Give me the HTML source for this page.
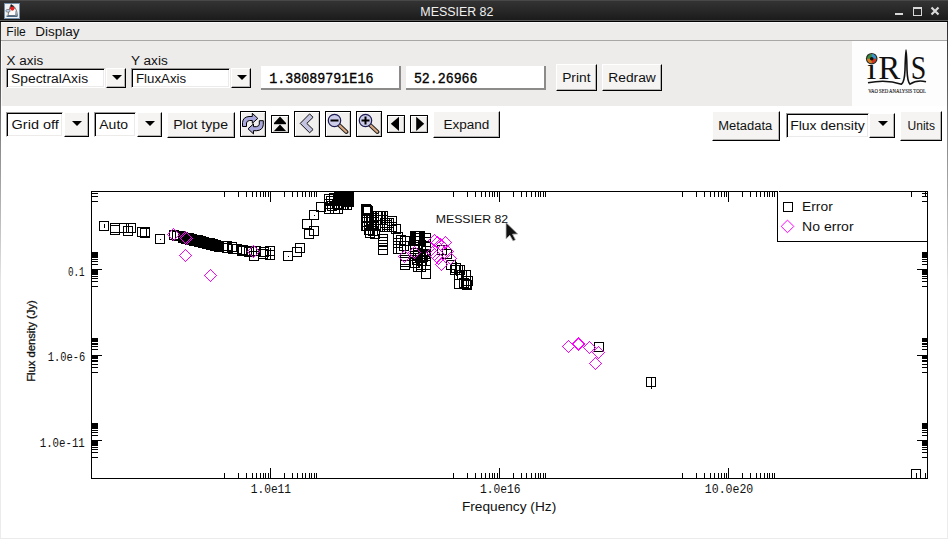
<!DOCTYPE html>
<html><head><meta charset="utf-8">
<style>
*{margin:0;padding:0;box-sizing:border-box}
html,body{width:948px;height:539px;overflow:hidden;background:#fff;font-family:"Liberation Sans",sans-serif;color:#111}
.a{position:absolute}
#title{left:0;top:0;width:948px;height:22px;background:linear-gradient(#484848 0px,#484848 1px,#333 1px,#262626 12px,#1b1b1b 20px,#5c5c5c 20px,#5c5c5c 21px,#000 21px)}
#lb{left:0;top:22px;width:1px;height:517px;background:linear-gradient(#2a2a2a,#888 120px,#e6e6e6 260px,#ececec)}
#rb{left:947px;top:22px;width:1px;height:517px;background:linear-gradient(#2a2a2a,#888 120px,#e6e6e6 260px,#ececec)}
#bb{left:0;top:538px;width:948px;height:1px;background:#ecebea}
#menu{left:1px;top:22px;width:946px;height:19px;background:#edeceb;border-top:1px solid #f8f8f8;border-bottom:1px solid #a9a7a5}
#tb{left:1px;top:41px;width:851px;height:65px;background:#edeceb;border-left:1px solid #fafafa}
#logo{left:852px;top:41px;width:95px;height:65px;background:#fdfdfd}
.combo{height:20px}
.ctext{position:absolute;left:0;top:0;bottom:0;background:#fff;border:1px solid;border-color:#9c9a98 #fff #fff #9c9a98;box-shadow:inset 1px 1px #000,inset -1px -1px #ecebea}
.carr{position:absolute;top:0;bottom:0;background:#f5f4f2;border:1px solid;border-color:#fff #000 #000 #fff;box-shadow:inset -1px -1px #b6b4b2}
.tri{position:absolute;width:0;height:0;border-left:5px solid transparent;border-right:5px solid transparent;border-top:5.5px solid #000}
.btn{background:#f5f4f2;border:1px solid;border-color:#fff #000 #000 #fff;box-shadow:inset -1px -1px #b6b4b2}
.tf{background:#fff;border-right:2px solid #8c8b8a;border-bottom:2px solid #8c8b8a}
.ib{background:#f1f0ee;border:1px solid #000;box-shadow:inset 1px 1px #fff,inset -1px -1px #c8c6c4}
</style></head><body>
<div id="title" class="a">
  
</div>
<div id="lb" class="a"></div><div id="rb" class="a"></div><div id="bb" class="a"></div>
<div id="menu" class="a">
  
  
</div>
<div id="tb" class="a"></div>
<div id="logo" class="a"></div>

<!-- row 1 -->



<div class="a combo" style="left:6px;top:68px;width:120px">
  <div class="ctext" style="width:99px"></div>
  <div class="carr" style="left:100px;width:20px"><div class="tri" style="left:5px;top:6px"></div></div>
</div>
<div class="a combo" style="left:131px;top:68px;width:120px">
  <div class="ctext" style="width:99px"></div>
  <div class="carr" style="left:100px;width:20px"><div class="tri" style="left:5px;top:6px"></div></div>
</div>

<div class="a tf" style="left:261px;top:66px;width:140px;height:24px;padding:3px 0 0 7px"></div>
<div class="a tf" style="left:406px;top:66px;width:140px;height:24px;padding:3px 0 0 7px"></div>
<div class="a btn" style="left:556px;top:64px;width:41px;height:27px;line-height:24px"></div>
<div class="a btn" style="left:602px;top:64px;width:60px;height:27px;line-height:24px"></div>

<!-- row 2 -->
<div class="a combo" style="left:6px;top:112px;width:83px;height:25px">
  <div class="ctext" style="width:57px"></div>
  <div class="carr" style="left:58px;width:25px"><div class="tri" style="left:7px;top:8px"></div></div>
</div>
<div class="a combo" style="left:94px;top:112px;width:68px;height:25px">
  <div class="ctext" style="width:42px"></div>
  <div class="carr" style="left:43px;width:25px"><div class="tri" style="left:7px;top:8px"></div></div>
</div>
<div class="a btn" style="left:167px;top:112px;width:68px;height:26px;line-height:23px"></div>

<div class="a ib" style="left:240px;top:111px;width:26px;height:26px"></div>
<div class="a ib" style="left:271px;top:115px;width:18px;height:18px"></div>
<div class="a ib" style="left:294px;top:111px;width:26px;height:26px"></div>
<div class="a ib" style="left:325px;top:111px;width:26px;height:26px"></div>
<div class="a ib" style="left:356px;top:111px;width:26px;height:26px"></div>
<div class="a ib" style="left:387px;top:115px;width:18px;height:18px"></div>
<div class="a ib" style="left:410px;top:115px;width:18px;height:18px"></div>
<div class="a btn" style="left:433px;top:111px;width:67px;height:27px;line-height:24px"></div>

<div class="a btn" style="left:712px;top:111px;width:68px;height:30px;line-height:27px"></div>
<div class="a combo" style="left:786px;top:113px;width:109px;height:25px">
  <div class="ctext" style="width:83px"></div>
  <div class="carr" style="left:83px;width:26px"><div class="tri" style="left:8px;top:7px"></div></div>
</div>
<div class="a btn" style="left:900px;top:111px;width:42px;height:30px;line-height:27px"></div>

<svg class="a" style="left:0;top:0" width="948" height="539" shape-rendering="crispEdges">
<path d="M91.5 191.5H927.5V478.5H91.5Z" fill="none" stroke="#000" stroke-width="1"/>

<path d="M777.5 191V241.5H927" fill="#fff" stroke="#000"/>
<rect x="778" y="192" width="149" height="49" fill="#fff"/>
<path d="M783.5 202.5h9v9h-9Z" fill="none" stroke="#000"/>
<path d="M787.5 220.1L793.8 226.4L787.5 232.7L781.2 226.4Z" fill="none" stroke="#f0f" shape-rendering="geometricPrecision"/>
<text x="802.10" y="211" font-family="Liberation Sans" font-size="12.5" fill="#111" textLength="30.63" lengthAdjust="spacingAndGlyphs" >Error</text><text x="802.10" y="231" font-family="Liberation Sans" font-size="12.5" fill="#111" textLength="51.47" lengthAdjust="spacingAndGlyphs" >No error</text>
<path d="M506 222.5V239L509.8 235.3L513 241L515.5 239.8L512.6 234.2L517.8 234Z" fill="#111" stroke="#bbb" stroke-width="0.8" shape-rendering="geometricPrecision"/>

<path d="M270.5 478v-10M270.5 192v10M224.5 478v-5M224.5 192v5M238.5 478v-5M238.5 192v5M246.5 478v-5M246.5 192v5M252.5 478v-5M252.5 192v5M256.5 478v-5M256.5 192v5M260.5 478v-5M260.5 192v5M263.5 478v-5M263.5 192v5M265.5 478v-5M265.5 192v5M268.5 478v-5M268.5 192v5M284.5 478v-5M284.5 192v5M292.5 478v-5M292.5 192v5M297.5 478v-5M297.5 192v5M302.5 478v-5M302.5 192v5M305.5 478v-5M305.5 192v5M309.5 478v-5M309.5 192v5M311.5 478v-5M311.5 192v5M314.5 478v-5M314.5 192v5M316.5 478v-5M316.5 192v5M499.5 478v-10M499.5 192v10M453.5 478v-5M453.5 192v5M467.5 478v-5M467.5 192v5M475.5 478v-5M475.5 192v5M481.5 478v-5M481.5 192v5M485.5 478v-5M485.5 192v5M489.5 478v-5M489.5 192v5M492.5 478v-5M492.5 192v5M494.5 478v-5M494.5 192v5M497.5 478v-5M497.5 192v5M513.5 478v-5M513.5 192v5M521.5 478v-5M521.5 192v5M526.5 478v-5M526.5 192v5M531.5 478v-5M531.5 192v5M535.5 478v-5M535.5 192v5M538.5 478v-5M538.5 192v5M540.5 478v-5M540.5 192v5M543.5 478v-5M543.5 192v5M545.5 478v-5M545.5 192v5M728.5 478v-10M728.5 192v10M682.5 478v-5M682.5 192v5M696.5 478v-5M696.5 192v5M704.5 478v-5M704.5 192v5M710.5 478v-5M710.5 192v5M714.5 478v-5M714.5 192v5M718.5 478v-5M718.5 192v5M721.5 478v-5M721.5 192v5M724.5 478v-5M724.5 192v5M726.5 478v-5M726.5 192v5M742.5 478v-5M742.5 192v5M750.5 478v-5M750.5 192v5M756.5 478v-5M756.5 192v5M760.5 478v-5M760.5 192v5M764.5 478v-5M764.5 192v5M767.5 478v-5M767.5 192v5M769.5 478v-5M769.5 192v5M772.5 478v-5M772.5 192v5M774.5 478v-5M774.5 192v5M911.5 478v-5M911.5 192v5M925.5 478v-5M925.5 192v5M92 440.5h10M927 440.5h-10M92 457.5h6M927 457.5h-5M92 452.5h6M927 452.5h-5M92 449.5h6M927 449.5h-5M92 447.5h6M927 447.5h-5M92 445.5h6M927 445.5h-5M92 444.5h6M927 444.5h-5M92 443.5h6M927 443.5h-5M92 442.5h6M927 442.5h-5M92 441.5h6M927 441.5h-5M92 435.5h6M927 435.5h-5M92 432.5h6M927 432.5h-5M92 430.5h6M927 430.5h-5M92 428.5h6M927 428.5h-5M92 427.5h6M927 427.5h-5M92 426.5h6M927 426.5h-5M92 425.5h6M927 425.5h-5M92 424.5h6M927 424.5h-5M92 423.5h6M927 423.5h-5M92 355.5h10M927 355.5h-10M92 372.5h6M927 372.5h-5M92 367.5h6M927 367.5h-5M92 364.5h6M927 364.5h-5M92 361.5h6M927 361.5h-5M92 360.5h6M927 360.5h-5M92 358.5h6M927 358.5h-5M92 357.5h6M927 357.5h-5M92 356.5h6M927 356.5h-5M92 355.5h6M927 355.5h-5M92 349.5h6M927 349.5h-5M92 346.5h6M927 346.5h-5M92 344.5h6M927 344.5h-5M92 343.5h6M927 343.5h-5M92 341.5h6M927 341.5h-5M92 340.5h6M927 340.5h-5M92 339.5h6M927 339.5h-5M92 338.5h6M927 338.5h-5M92 338.5h6M927 338.5h-5M92 269.5h10M927 269.5h-10M92 286.5h6M927 286.5h-5M92 281.5h6M927 281.5h-5M92 278.5h6M927 278.5h-5M92 276.5h6M927 276.5h-5M92 274.5h6M927 274.5h-5M92 273.5h6M927 273.5h-5M92 272.5h6M927 272.5h-5M92 271.5h6M927 271.5h-5M92 270.5h6M927 270.5h-5M92 264.5h6M927 264.5h-5M92 261.5h6M927 261.5h-5M92 259.5h6M927 259.5h-5M92 257.5h6M927 257.5h-5M92 256.5h6M927 256.5h-5M92 255.5h6M927 255.5h-5M92 254.5h6M927 254.5h-5M92 253.5h6M927 253.5h-5M92 252.5h6M927 252.5h-5M92 201.5h6M927 201.5h-5M92 196.5h6M927 196.5h-5M92 193.5h6M927 193.5h-5" stroke="#000" stroke-width="1" fill="none"/>
<path d="M99.5 221.5h9v9h-9ZM110.5 223.5h9v9h-9ZM110.5 225.5h9v9h-9ZM119.5 223.5h9v9h-9ZM123.5 226.5h9v9h-9ZM126.5 223.5h9v9h-9ZM137.5 227.5h9v9h-9ZM140.5 228.5h9v9h-9ZM140.5 227.5h9v9h-9ZM155.5 234.5h9v9h-9ZM169.5 230.5h9v9h-9ZM172.5 231.5h9v9h-9ZM175.5 231.5h9v9h-9ZM178.5 233.5h9v9h-9ZM179.5 233.5h9v9h-9ZM180.5 233.5h9v9h-9ZM181.5 234.5h9v9h-9ZM182.5 234.5h9v9h-9ZM183.5 234.5h9v9h-9ZM184.5 234.5h9v9h-9ZM185.5 235.5h9v9h-9ZM186.5 235.5h9v9h-9ZM187.5 235.5h9v9h-9ZM188.5 235.5h9v9h-9ZM189.5 236.5h9v9h-9ZM190.5 236.5h9v9h-9ZM191.5 236.5h9v9h-9ZM192.5 236.5h9v9h-9ZM193.5 236.5h9v9h-9ZM194.5 237.5h9v9h-9ZM195.5 237.5h9v9h-9ZM196.5 237.5h9v9h-9ZM197.5 237.5h9v9h-9ZM198.5 238.5h9v9h-9ZM199.5 238.5h9v9h-9ZM200.5 238.5h9v9h-9ZM201.5 238.5h9v9h-9ZM202.5 239.5h9v9h-9ZM203.5 239.5h9v9h-9ZM204.5 239.5h9v9h-9ZM205.5 239.5h9v9h-9ZM206.5 240.5h9v9h-9ZM207.5 240.5h9v9h-9ZM208.5 240.5h9v9h-9ZM209.5 240.5h9v9h-9ZM210.5 241.5h9v9h-9ZM211.5 241.5h9v9h-9ZM212.5 241.5h9v9h-9ZM213.5 241.5h9v9h-9ZM214.5 242.5h9v9h-9ZM178.5 232.5h9v9h-9ZM181.5 233.5h9v9h-9ZM184.5 233.5h9v9h-9ZM187.5 234.5h9v9h-9ZM190.5 235.5h9v9h-9ZM193.5 235.5h9v9h-9ZM196.5 236.5h9v9h-9ZM199.5 237.5h9v9h-9ZM202.5 238.5h9v9h-9ZM205.5 238.5h9v9h-9ZM208.5 239.5h9v9h-9ZM211.5 240.5h9v9h-9ZM214.5 241.5h9v9h-9ZM218.5 241.5h9v9h-9ZM222.5 241.5h9v9h-9ZM222.5 243.5h9v9h-9ZM227.5 242.5h9v9h-9ZM228.5 244.5h9v9h-9ZM232.5 244.5h9v9h-9ZM238.5 245.5h9v9h-9ZM237.5 246.5h9v9h-9ZM244.5 247.5h9v9h-9ZM247.5 246.5h9v9h-9ZM249.5 251.5h9v9h-9ZM251.5 246.5h9v9h-9ZM258.5 249.5h9v9h-9ZM259.5 247.5h9v9h-9ZM265.5 246.5h9v9h-9ZM265.5 250.5h9v9h-9ZM283.5 251.5h9v9h-9ZM292.5 247.5h9v9h-9ZM295.5 243.5h9v9h-9ZM304.5 229.5h9v9h-9ZM309.5 226.5h9v9h-9ZM302.5 219.5h9v9h-9ZM309.5 210.5h9v9h-9ZM316.5 202.5h9v9h-9ZM335.5 192.5h9v9h-9ZM335.5 196.5h9v9h-9ZM336.5 192.5h9v9h-9ZM336.5 196.5h9v9h-9ZM337.5 192.5h9v9h-9ZM337.5 196.5h9v9h-9ZM338.5 192.5h9v9h-9ZM338.5 196.5h9v9h-9ZM339.5 192.5h9v9h-9ZM339.5 196.5h9v9h-9ZM340.5 192.5h9v9h-9ZM340.5 196.5h9v9h-9ZM341.5 192.5h9v9h-9ZM341.5 196.5h9v9h-9ZM342.5 192.5h9v9h-9ZM342.5 196.5h9v9h-9ZM343.5 192.5h9v9h-9ZM343.5 196.5h9v9h-9ZM344.5 192.5h9v9h-9ZM344.5 196.5h9v9h-9ZM334.5 200.5h9v9h-9ZM336.5 200.5h9v9h-9ZM338.5 200.5h9v9h-9ZM339.5 200.5h9v9h-9ZM342.5 200.5h9v9h-9ZM344.5 197.5h9v9h-9ZM337.5 193.5h9v9h-9ZM324.5 194.5h9v9h-9ZM324.5 199.5h9v9h-9ZM324.5 204.5h9v9h-9ZM326.5 196.5h9v9h-9ZM327.5 201.5h9v9h-9ZM329.5 193.5h9v9h-9ZM330.5 204.5h9v9h-9ZM332.5 199.5h9v9h-9ZM333.5 204.5h9v9h-9ZM334.5 192.5h9v9h-9ZM361.5 204.5h9v9h-9ZM362.5 205.5h9v9h-9ZM363.5 206.5h9v9h-9ZM361.5 213.5h9v9h-9ZM361.5 217.5h9v9h-9ZM361.5 221.5h9v9h-9ZM362.5 213.5h9v9h-9ZM362.5 217.5h9v9h-9ZM362.5 221.5h9v9h-9ZM364.5 213.5h9v9h-9ZM364.5 217.5h9v9h-9ZM364.5 221.5h9v9h-9ZM366.5 213.5h9v9h-9ZM366.5 217.5h9v9h-9ZM366.5 221.5h9v9h-9ZM367.5 213.5h9v9h-9ZM367.5 217.5h9v9h-9ZM367.5 221.5h9v9h-9ZM369.5 213.5h9v9h-9ZM369.5 217.5h9v9h-9ZM369.5 221.5h9v9h-9ZM364.5 225.5h9v9h-9ZM365.5 228.5h9v9h-9ZM368.5 226.5h9v9h-9ZM370.5 229.5h9v9h-9ZM372.5 211.5h9v9h-9ZM372.5 215.5h9v9h-9ZM373.5 211.5h9v9h-9ZM373.5 215.5h9v9h-9ZM375.5 211.5h9v9h-9ZM375.5 215.5h9v9h-9ZM376.5 211.5h9v9h-9ZM376.5 215.5h9v9h-9ZM378.5 211.5h9v9h-9ZM378.5 215.5h9v9h-9ZM380.5 218.5h9v9h-9ZM380.5 222.5h9v9h-9ZM382.5 218.5h9v9h-9ZM382.5 222.5h9v9h-9ZM384.5 218.5h9v9h-9ZM384.5 222.5h9v9h-9ZM387.5 216.5h9v9h-9ZM387.5 222.5h9v9h-9ZM391.5 224.5h9v9h-9ZM378.5 234.5h9v9h-9ZM378.5 237.5h9v9h-9ZM378.5 240.5h9v9h-9ZM378.5 245.5h9v9h-9ZM382.5 220.5h9v9h-9ZM367.5 215.5h9v9h-9ZM393.5 232.5h9v9h-9ZM396.5 235.5h9v9h-9ZM393.5 238.5h9v9h-9ZM399.5 241.5h9v9h-9ZM393.5 244.5h9v9h-9ZM396.5 244.5h9v9h-9ZM400.5 236.5h9v9h-9ZM400.5 255.5h9v9h-9ZM400.5 260.5h9v9h-9ZM400.5 257.5h9v9h-9ZM410.5 231.5h9v9h-9ZM410.5 233.5h9v9h-9ZM410.5 236.5h9v9h-9ZM411.5 231.5h9v9h-9ZM411.5 233.5h9v9h-9ZM411.5 236.5h9v9h-9ZM412.5 231.5h9v9h-9ZM412.5 233.5h9v9h-9ZM412.5 236.5h9v9h-9ZM413.5 231.5h9v9h-9ZM413.5 233.5h9v9h-9ZM413.5 236.5h9v9h-9ZM414.5 231.5h9v9h-9ZM414.5 233.5h9v9h-9ZM414.5 236.5h9v9h-9ZM415.5 231.5h9v9h-9ZM415.5 233.5h9v9h-9ZM415.5 236.5h9v9h-9ZM410.5 244.5h9v9h-9ZM413.5 248.5h9v9h-9ZM410.5 251.5h9v9h-9ZM415.5 253.5h9v9h-9ZM410.5 258.5h9v9h-9ZM416.5 260.5h9v9h-9ZM413.5 262.5h9v9h-9ZM410.5 248.5h9v9h-9ZM412.5 255.5h9v9h-9ZM421.5 233.5h9v9h-9ZM421.5 237.5h9v9h-9ZM421.5 241.5h9v9h-9ZM421.5 246.5h9v9h-9ZM421.5 251.5h9v9h-9ZM421.5 256.5h9v9h-9ZM421.5 260.5h9v9h-9ZM416.5 262.5h9v9h-9ZM421.5 269.5h9v9h-9ZM418.5 252.5h9v9h-9ZM413.5 250.5h9v9h-9ZM417.5 256.5h9v9h-9ZM420.5 249.5h9v9h-9ZM437.5 245.5h9v9h-9ZM442.5 249.5h9v9h-9ZM446.5 260.5h9v9h-9ZM450.5 265.5h9v9h-9ZM455.5 265.5h9v9h-9ZM454.5 270.5h9v9h-9ZM454.5 279.5h9v9h-9ZM461.5 270.5h9v9h-9ZM463.5 276.5h9v9h-9ZM462.5 280.5h9v9h-9ZM459.5 278.5h9v9h-9ZM451.5 263.5h9v9h-9ZM457.5 270.5h9v9h-9ZM461.5 279.5h9v9h-9ZM594.5 342.5h9v9h-9ZM646.5 377.5h9v9h-9ZM911.5 469.5h9v9h-9Z" fill="none" stroke="#000" stroke-width="1"/>
<path d="M104.5 224V228M160.5 238.5V239.5M270.5 248V259M288.5 255.5V256.5M314.5 214.5V215.5M349.5 193V207M342.5 194V206M387.5 213V232M372.5 207V236M418.5 240V268M422.5 245V270M425.5 240V265M456.5 262V276M462.5 266V284M466.5 275V289M599.5 346.5V347.5M651.5 377V389M916.5 473V478" fill="none" stroke="#000" stroke-width="1"/>
<path d="M167 234h1v1h-1ZM168 233h1v1h-1ZM168 235h1v1h-1ZM169 232h1v1h-1ZM169 236h1v1h-1ZM170 231h1v1h-1ZM170 237h1v1h-1ZM171 230h1v1h-1ZM171 238h1v1h-1ZM172 229h1v1h-1ZM172 239h1v1h-1ZM173 228h1v1h-1ZM173 240h1v1h-1ZM174 229h1v1h-1ZM174 239h1v1h-1ZM175 230h1v1h-1ZM175 238h1v1h-1ZM176 231h1v1h-1ZM176 237h1v1h-1ZM177 232h1v1h-1ZM177 236h1v1h-1ZM178 233h1v1h-1ZM178 235h1v1h-1ZM179 234h1v1h-1ZM179 237h1v1h-1ZM180 236h1v1h-1ZM180 238h1v1h-1ZM181 235h1v1h-1ZM181 239h1v1h-1ZM182 234h1v1h-1ZM182 240h1v1h-1ZM183 233h1v1h-1ZM183 241h1v1h-1ZM184 232h1v1h-1ZM184 242h1v1h-1ZM185 231h1v1h-1ZM185 243h1v1h-1ZM186 232h1v1h-1ZM186 242h1v1h-1ZM187 233h1v1h-1ZM187 241h1v1h-1ZM188 234h1v1h-1ZM188 240h1v1h-1ZM189 235h1v1h-1ZM189 239h1v1h-1ZM190 236h1v1h-1ZM190 238h1v1h-1ZM191 237h1v1h-1ZM180 238h1v1h-1ZM181 237h1v1h-1ZM181 239h1v1h-1ZM182 236h1v1h-1ZM182 240h1v1h-1ZM183 235h1v1h-1ZM183 241h1v1h-1ZM184 234h1v1h-1ZM184 242h1v1h-1ZM185 233h1v1h-1ZM185 243h1v1h-1ZM186 232h1v1h-1ZM186 244h1v1h-1ZM187 233h1v1h-1ZM187 243h1v1h-1ZM188 234h1v1h-1ZM188 242h1v1h-1ZM189 235h1v1h-1ZM189 241h1v1h-1ZM190 236h1v1h-1ZM190 240h1v1h-1ZM191 237h1v1h-1ZM191 239h1v1h-1ZM192 238h1v1h-1ZM179 255h1v1h-1ZM180 254h1v1h-1ZM180 256h1v1h-1ZM181 253h1v1h-1ZM181 257h1v1h-1ZM182 252h1v1h-1ZM182 258h1v1h-1ZM183 251h1v1h-1ZM183 259h1v1h-1ZM184 250h1v1h-1ZM184 260h1v1h-1ZM185 249h1v1h-1ZM185 261h1v1h-1ZM186 250h1v1h-1ZM186 260h1v1h-1ZM187 251h1v1h-1ZM187 259h1v1h-1ZM188 252h1v1h-1ZM188 258h1v1h-1ZM189 253h1v1h-1ZM189 257h1v1h-1ZM190 254h1v1h-1ZM190 256h1v1h-1ZM191 255h1v1h-1ZM204 275h1v1h-1ZM205 274h1v1h-1ZM205 276h1v1h-1ZM206 273h1v1h-1ZM206 277h1v1h-1ZM207 272h1v1h-1ZM207 278h1v1h-1ZM208 271h1v1h-1ZM208 279h1v1h-1ZM209 270h1v1h-1ZM209 280h1v1h-1ZM210 269h1v1h-1ZM210 281h1v1h-1ZM211 270h1v1h-1ZM211 280h1v1h-1ZM212 271h1v1h-1ZM212 279h1v1h-1ZM213 272h1v1h-1ZM213 278h1v1h-1ZM214 273h1v1h-1ZM214 277h1v1h-1ZM215 274h1v1h-1ZM215 276h1v1h-1ZM216 275h1v1h-1ZM247 251h1v1h-1ZM248 250h1v1h-1ZM248 252h1v1h-1ZM249 249h1v1h-1ZM249 253h1v1h-1ZM250 248h1v1h-1ZM250 254h1v1h-1ZM251 247h1v1h-1ZM251 255h1v1h-1ZM252 246h1v1h-1ZM252 256h1v1h-1ZM253 245h1v1h-1ZM253 257h1v1h-1ZM254 246h1v1h-1ZM254 256h1v1h-1ZM255 247h1v1h-1ZM255 255h1v1h-1ZM256 248h1v1h-1ZM256 254h1v1h-1ZM257 249h1v1h-1ZM257 253h1v1h-1ZM258 250h1v1h-1ZM258 252h1v1h-1ZM259 251h1v1h-1ZM398 256h1v1h-1ZM399 255h1v1h-1ZM399 257h1v1h-1ZM400 254h1v1h-1ZM400 258h1v1h-1ZM401 253h1v1h-1ZM401 259h1v1h-1ZM402 252h1v1h-1ZM402 260h1v1h-1ZM403 251h1v1h-1ZM403 261h1v1h-1ZM404 250h1v1h-1ZM404 262h1v1h-1ZM405 251h1v1h-1ZM405 261h1v1h-1ZM406 252h1v1h-1ZM406 260h1v1h-1ZM407 253h1v1h-1ZM407 259h1v1h-1ZM408 254h1v1h-1ZM408 258h1v1h-1ZM409 255h1v1h-1ZM409 257h1v1h-1ZM410 256h1v1h-1ZM408 252h1v1h-1ZM409 251h1v1h-1ZM409 253h1v1h-1ZM410 250h1v1h-1ZM410 254h1v1h-1ZM411 249h1v1h-1ZM411 255h1v1h-1ZM412 248h1v1h-1ZM412 256h1v1h-1ZM413 247h1v1h-1ZM413 257h1v1h-1ZM414 246h1v1h-1ZM414 258h1v1h-1ZM415 247h1v1h-1ZM415 257h1v1h-1ZM416 248h1v1h-1ZM416 256h1v1h-1ZM417 249h1v1h-1ZM417 255h1v1h-1ZM418 250h1v1h-1ZM418 254h1v1h-1ZM419 251h1v1h-1ZM419 253h1v1h-1ZM420 252h1v1h-1ZM428 240h1v1h-1ZM429 239h1v1h-1ZM429 241h1v1h-1ZM430 238h1v1h-1ZM430 242h1v1h-1ZM431 237h1v1h-1ZM431 243h1v1h-1ZM432 236h1v1h-1ZM432 244h1v1h-1ZM433 235h1v1h-1ZM433 245h1v1h-1ZM434 234h1v1h-1ZM434 246h1v1h-1ZM435 235h1v1h-1ZM435 245h1v1h-1ZM436 236h1v1h-1ZM436 244h1v1h-1ZM437 237h1v1h-1ZM437 243h1v1h-1ZM438 238h1v1h-1ZM438 242h1v1h-1ZM439 239h1v1h-1ZM439 241h1v1h-1ZM440 240h1v1h-1ZM431 242h1v1h-1ZM432 241h1v1h-1ZM432 243h1v1h-1ZM433 240h1v1h-1ZM433 244h1v1h-1ZM434 239h1v1h-1ZM434 245h1v1h-1ZM435 238h1v1h-1ZM435 246h1v1h-1ZM436 237h1v1h-1ZM436 247h1v1h-1ZM437 236h1v1h-1ZM437 248h1v1h-1ZM438 237h1v1h-1ZM438 247h1v1h-1ZM439 238h1v1h-1ZM439 246h1v1h-1ZM440 239h1v1h-1ZM440 245h1v1h-1ZM441 240h1v1h-1ZM441 244h1v1h-1ZM442 241h1v1h-1ZM442 243h1v1h-1ZM443 242h1v1h-1ZM434 244h1v1h-1ZM435 243h1v1h-1ZM435 245h1v1h-1ZM436 242h1v1h-1ZM436 246h1v1h-1ZM437 241h1v1h-1ZM437 247h1v1h-1ZM438 240h1v1h-1ZM438 248h1v1h-1ZM439 239h1v1h-1ZM439 249h1v1h-1ZM440 238h1v1h-1ZM440 250h1v1h-1ZM441 239h1v1h-1ZM441 249h1v1h-1ZM442 240h1v1h-1ZM442 248h1v1h-1ZM443 241h1v1h-1ZM443 247h1v1h-1ZM444 242h1v1h-1ZM444 246h1v1h-1ZM445 243h1v1h-1ZM445 245h1v1h-1ZM446 244h1v1h-1ZM439 242h1v1h-1ZM440 241h1v1h-1ZM440 243h1v1h-1ZM441 240h1v1h-1ZM441 244h1v1h-1ZM442 239h1v1h-1ZM442 245h1v1h-1ZM443 238h1v1h-1ZM443 246h1v1h-1ZM444 237h1v1h-1ZM444 247h1v1h-1ZM445 236h1v1h-1ZM445 248h1v1h-1ZM446 237h1v1h-1ZM446 247h1v1h-1ZM447 238h1v1h-1ZM447 246h1v1h-1ZM448 239h1v1h-1ZM448 245h1v1h-1ZM449 240h1v1h-1ZM449 244h1v1h-1ZM450 241h1v1h-1ZM450 243h1v1h-1ZM451 242h1v1h-1ZM426 252h1v1h-1ZM427 251h1v1h-1ZM427 253h1v1h-1ZM428 250h1v1h-1ZM428 254h1v1h-1ZM429 249h1v1h-1ZM429 255h1v1h-1ZM430 248h1v1h-1ZM430 256h1v1h-1ZM431 247h1v1h-1ZM431 257h1v1h-1ZM432 246h1v1h-1ZM432 258h1v1h-1ZM433 247h1v1h-1ZM433 257h1v1h-1ZM434 248h1v1h-1ZM434 256h1v1h-1ZM435 249h1v1h-1ZM435 255h1v1h-1ZM436 250h1v1h-1ZM436 254h1v1h-1ZM437 251h1v1h-1ZM437 253h1v1h-1ZM438 252h1v1h-1ZM428 254h1v1h-1ZM429 253h1v1h-1ZM429 255h1v1h-1ZM430 252h1v1h-1ZM430 256h1v1h-1ZM431 251h1v1h-1ZM431 257h1v1h-1ZM432 250h1v1h-1ZM432 258h1v1h-1ZM433 249h1v1h-1ZM433 259h1v1h-1ZM434 248h1v1h-1ZM434 260h1v1h-1ZM435 249h1v1h-1ZM435 259h1v1h-1ZM436 250h1v1h-1ZM436 258h1v1h-1ZM437 251h1v1h-1ZM437 257h1v1h-1ZM438 252h1v1h-1ZM438 256h1v1h-1ZM439 253h1v1h-1ZM439 255h1v1h-1ZM440 254h1v1h-1ZM430 256h1v1h-1ZM431 255h1v1h-1ZM431 257h1v1h-1ZM432 254h1v1h-1ZM432 258h1v1h-1ZM433 253h1v1h-1ZM433 259h1v1h-1ZM434 252h1v1h-1ZM434 260h1v1h-1ZM435 251h1v1h-1ZM435 261h1v1h-1ZM436 250h1v1h-1ZM436 262h1v1h-1ZM437 251h1v1h-1ZM437 261h1v1h-1ZM438 252h1v1h-1ZM438 260h1v1h-1ZM439 253h1v1h-1ZM439 259h1v1h-1ZM440 254h1v1h-1ZM440 258h1v1h-1ZM441 255h1v1h-1ZM441 257h1v1h-1ZM442 256h1v1h-1ZM432 258h1v1h-1ZM433 257h1v1h-1ZM433 259h1v1h-1ZM434 256h1v1h-1ZM434 260h1v1h-1ZM435 255h1v1h-1ZM435 261h1v1h-1ZM436 254h1v1h-1ZM436 262h1v1h-1ZM437 253h1v1h-1ZM437 263h1v1h-1ZM438 252h1v1h-1ZM438 264h1v1h-1ZM439 253h1v1h-1ZM439 263h1v1h-1ZM440 254h1v1h-1ZM440 262h1v1h-1ZM441 255h1v1h-1ZM441 261h1v1h-1ZM442 256h1v1h-1ZM442 260h1v1h-1ZM443 257h1v1h-1ZM443 259h1v1h-1ZM444 258h1v1h-1ZM435 264h1v1h-1ZM436 263h1v1h-1ZM436 265h1v1h-1ZM437 262h1v1h-1ZM437 266h1v1h-1ZM438 261h1v1h-1ZM438 267h1v1h-1ZM439 260h1v1h-1ZM439 268h1v1h-1ZM440 259h1v1h-1ZM440 269h1v1h-1ZM441 258h1v1h-1ZM441 270h1v1h-1ZM442 259h1v1h-1ZM442 269h1v1h-1ZM443 260h1v1h-1ZM443 268h1v1h-1ZM444 261h1v1h-1ZM444 267h1v1h-1ZM445 262h1v1h-1ZM445 266h1v1h-1ZM446 263h1v1h-1ZM446 265h1v1h-1ZM447 264h1v1h-1ZM444 258h1v1h-1ZM445 257h1v1h-1ZM445 259h1v1h-1ZM446 256h1v1h-1ZM446 260h1v1h-1ZM447 255h1v1h-1ZM447 261h1v1h-1ZM448 254h1v1h-1ZM448 262h1v1h-1ZM449 253h1v1h-1ZM449 263h1v1h-1ZM450 252h1v1h-1ZM450 264h1v1h-1ZM451 253h1v1h-1ZM451 263h1v1h-1ZM452 254h1v1h-1ZM452 262h1v1h-1ZM453 255h1v1h-1ZM453 261h1v1h-1ZM454 256h1v1h-1ZM454 260h1v1h-1ZM455 257h1v1h-1ZM455 259h1v1h-1ZM456 258h1v1h-1ZM441 251h1v1h-1ZM442 250h1v1h-1ZM442 252h1v1h-1ZM443 249h1v1h-1ZM443 253h1v1h-1ZM444 248h1v1h-1ZM444 254h1v1h-1ZM445 247h1v1h-1ZM445 255h1v1h-1ZM446 246h1v1h-1ZM446 256h1v1h-1ZM447 245h1v1h-1ZM447 257h1v1h-1ZM448 246h1v1h-1ZM448 256h1v1h-1ZM449 247h1v1h-1ZM449 255h1v1h-1ZM450 248h1v1h-1ZM450 254h1v1h-1ZM451 249h1v1h-1ZM451 253h1v1h-1ZM452 250h1v1h-1ZM452 252h1v1h-1ZM453 251h1v1h-1ZM562 346h1v1h-1ZM563 345h1v1h-1ZM563 347h1v1h-1ZM564 344h1v1h-1ZM564 348h1v1h-1ZM565 343h1v1h-1ZM565 349h1v1h-1ZM566 342h1v1h-1ZM566 350h1v1h-1ZM567 341h1v1h-1ZM567 351h1v1h-1ZM568 340h1v1h-1ZM568 352h1v1h-1ZM569 341h1v1h-1ZM569 351h1v1h-1ZM570 342h1v1h-1ZM570 350h1v1h-1ZM571 343h1v1h-1ZM571 349h1v1h-1ZM572 344h1v1h-1ZM572 348h1v1h-1ZM573 345h1v1h-1ZM573 347h1v1h-1ZM574 346h1v1h-1ZM572 343h1v1h-1ZM573 342h1v1h-1ZM573 344h1v1h-1ZM574 341h1v1h-1ZM574 345h1v1h-1ZM575 340h1v1h-1ZM575 346h1v1h-1ZM576 339h1v1h-1ZM576 347h1v1h-1ZM577 338h1v1h-1ZM577 348h1v1h-1ZM578 337h1v1h-1ZM578 349h1v1h-1ZM579 338h1v1h-1ZM579 348h1v1h-1ZM580 339h1v1h-1ZM580 347h1v1h-1ZM581 340h1v1h-1ZM581 346h1v1h-1ZM582 341h1v1h-1ZM582 345h1v1h-1ZM583 342h1v1h-1ZM583 344h1v1h-1ZM584 343h1v1h-1ZM572 344h1v1h-1ZM573 343h1v1h-1ZM573 345h1v1h-1ZM574 342h1v1h-1ZM574 346h1v1h-1ZM575 341h1v1h-1ZM575 347h1v1h-1ZM576 340h1v1h-1ZM576 348h1v1h-1ZM577 339h1v1h-1ZM577 349h1v1h-1ZM578 338h1v1h-1ZM578 350h1v1h-1ZM579 339h1v1h-1ZM579 349h1v1h-1ZM580 340h1v1h-1ZM580 348h1v1h-1ZM581 341h1v1h-1ZM581 347h1v1h-1ZM582 342h1v1h-1ZM582 346h1v1h-1ZM583 343h1v1h-1ZM583 345h1v1h-1ZM584 344h1v1h-1ZM583 347h1v1h-1ZM584 346h1v1h-1ZM584 348h1v1h-1ZM585 345h1v1h-1ZM585 349h1v1h-1ZM586 344h1v1h-1ZM586 350h1v1h-1ZM587 343h1v1h-1ZM587 351h1v1h-1ZM588 342h1v1h-1ZM588 352h1v1h-1ZM589 341h1v1h-1ZM589 353h1v1h-1ZM590 342h1v1h-1ZM590 352h1v1h-1ZM591 343h1v1h-1ZM591 351h1v1h-1ZM592 344h1v1h-1ZM592 350h1v1h-1ZM593 345h1v1h-1ZM593 349h1v1h-1ZM594 346h1v1h-1ZM594 348h1v1h-1ZM595 347h1v1h-1ZM592 352h1v1h-1ZM593 351h1v1h-1ZM593 353h1v1h-1ZM594 350h1v1h-1ZM594 354h1v1h-1ZM595 349h1v1h-1ZM595 355h1v1h-1ZM596 348h1v1h-1ZM596 356h1v1h-1ZM597 347h1v1h-1ZM597 357h1v1h-1ZM598 346h1v1h-1ZM598 358h1v1h-1ZM599 347h1v1h-1ZM599 357h1v1h-1ZM600 348h1v1h-1ZM600 356h1v1h-1ZM601 349h1v1h-1ZM601 355h1v1h-1ZM602 350h1v1h-1ZM602 354h1v1h-1ZM603 351h1v1h-1ZM603 353h1v1h-1ZM604 352h1v1h-1ZM589 363h1v1h-1ZM590 362h1v1h-1ZM590 364h1v1h-1ZM591 361h1v1h-1ZM591 365h1v1h-1ZM592 360h1v1h-1ZM592 366h1v1h-1ZM593 359h1v1h-1ZM593 367h1v1h-1ZM594 358h1v1h-1ZM594 368h1v1h-1ZM595 357h1v1h-1ZM595 369h1v1h-1ZM596 358h1v1h-1ZM596 368h1v1h-1ZM597 359h1v1h-1ZM597 367h1v1h-1ZM598 360h1v1h-1ZM598 366h1v1h-1ZM599 361h1v1h-1ZM599 365h1v1h-1ZM600 362h1v1h-1ZM600 364h1v1h-1ZM601 363h1v1h-1Z" fill="#ff00ff" shape-rendering="crispEdges"/>
<g shape-rendering="geometricPrecision"><text x="67.90" y="275.6" font-family="Liberation Mono" font-size="13.5" fill="#111" textLength="16.70" lengthAdjust="spacingAndGlyphs" >0.1</text><text x="47.80" y="360.8" font-family="Liberation Mono" font-size="13.5" fill="#111" textLength="37.50" lengthAdjust="spacingAndGlyphs" >1.0e-6</text><text x="39.70" y="446.8" font-family="Liberation Mono" font-size="13.5" fill="#111" textLength="45.11" lengthAdjust="spacingAndGlyphs" >1.0e-11</text><text x="250.80" y="492.7" font-family="Liberation Mono" font-size="13.5" fill="#111" textLength="40.21" lengthAdjust="spacingAndGlyphs" >1.0e11</text><text x="479.90" y="492.8" font-family="Liberation Mono" font-size="13.5" fill="#111" textLength="40.61" lengthAdjust="spacingAndGlyphs" >1.0e16</text><text x="704.80" y="492.7" font-family="Liberation Mono" font-size="13.5" fill="#111" textLength="48.51" lengthAdjust="spacingAndGlyphs" >10.0e20</text><text x="461.90" y="510.8" font-family="Liberation Sans" font-size="12" fill="#111" textLength="94.31" lengthAdjust="spacingAndGlyphs" >Frequency (Hz)</text><text x="435.70" y="222.6" font-family="Liberation Sans" font-size="11.7" fill="#111" textLength="72.52" lengthAdjust="spacingAndGlyphs" >MESSIER 82</text><g transform="translate(34.8,381.8) rotate(-90)"><text x="0.00" y="0" font-family="Liberation Sans" font-size="11.5" fill="#111" textLength="81.59" lengthAdjust="spacingAndGlyphs" stroke="#111" stroke-width="0.3">Flux density (Jy)</text></g></g>

<g shape-rendering="geometricPrecision">
<!-- refresh -->
<g fill="#a9a9dd" stroke="#000" stroke-width="1" stroke-linejoin="miter">
<path id="ra" d="M242.5 126.5V122.5Q243 117 249 116.5H252.3V113.3L257.8 118.4L252.3 123.3V120.5H249.5Q246.5 121 246.5 123V126.5Z"/>
<path d="M242.5 126.5V122.5Q243 117 249 116.5H252.3V113.3L257.8 118.4L252.3 123.3V120.5H249.5Q246.5 121 246.5 123V126.5Z" transform="rotate(180 252.9 123.6)"/>
</g>
<!-- up arrows -->
<path d="M280 116.5L286 123H274Z M280 124.5L286 131H274Z" fill="#000"/>
<rect x="274" y="123" width="12" height="1.2" fill="#000"/>
<!-- chevron -->
<path d="M300.2 123.4L309.6 113.9L313.1 117.3L306.8 123.4L313.1 129.5L309.6 132.8Z" fill="#c4c4e2" stroke="#111" stroke-width="1"/>
<!-- zoom out -->
<g>
<path d="M338.5 124.5L346.5 132" stroke="#222" stroke-width="4" stroke-linecap="round"/>
<path d="M338.8 124.8L346.2 131.7" stroke="#d9a880" stroke-width="2.2" stroke-linecap="round"/>
<circle cx="334.5" cy="120.5" r="6.2" fill="#cdcdea" stroke="#1a1a50" stroke-width="1.2"/>
<rect x="330.5" y="119.5" width="8" height="2" fill="#000"/>
</g>
<g>
<path d="M369.5 124.5L377.5 132" stroke="#222" stroke-width="4" stroke-linecap="round"/>
<path d="M369.8 124.8L377.2 131.7" stroke="#d9a880" stroke-width="2.2" stroke-linecap="round"/>
<circle cx="365.5" cy="120.5" r="6.2" fill="#cdcdea" stroke="#1a1a50" stroke-width="1.2"/>
<rect x="361.5" y="119.5" width="8" height="2" fill="#000"/>
<rect x="364.5" y="116.5" width="2" height="8" fill="#000"/>
</g>
<!-- left/right triangles -->
<path d="M390.8 123.8L399 116.8V131Z" fill="#000"/>
<path d="M424.2 123.8L416.2 116.8V131Z" fill="#000"/>
</g>
<!-- titlebar buttons -->
<g fill="#d8d8d8" shape-rendering="crispEdges">
<rect x="895" y="12.5" width="8" height="2.5"/>
<path d="M913 7h9v9h-9Z M914 9v6h7v-6Z" fill-rule="evenodd"/>
</g>
<path d="M931.5 7.5L938.5 14.5M938.5 7.5L931.5 14.5" stroke="#d8d8d8" stroke-width="2.2" shape-rendering="geometricPrecision"/>
<!-- java icon -->
<g shape-rendering="geometricPrecision">
<rect x="4.5" y="3.5" width="15" height="15" fill="#f2f2f2" stroke="#7590ab" stroke-width="1"/>
<path d="M11 4.5Q15 6 16.5 10.5L17.5 15.5H8L9 10Z" fill="#fafafa" stroke="#444" stroke-width="0.7"/>
<path d="M11 4.5Q14 5.5 14.8 8.5L10 9Z" fill="#1a1a1a"/>
<circle cx="12.3" cy="8.6" r="2.1" fill="#e82020"/>
<ellipse cx="8" cy="10.8" rx="2.2" ry="1.4" fill="#b8d0e8" stroke="#555" stroke-width="0.6"/>
<path d="M6.5 15.5H17.5V17H6.5Z" fill="#4a6a88"/>
<path d="M15.5 10L17.5 15.5H15Z" fill="#8898a8"/>
</g>
<!-- logo -->
<g shape-rendering="geometricPrecision">
<circle cx="871.7" cy="58.7" r="5.8" fill="#2a2a2a"/>
<circle cx="871.7" cy="58.7" r="4.6" fill="#3b8a3b"/>
<path d="M871.7 58.7L871.7 54.1A4.6 4.6 0 0 1 876.3 58.7Z" fill="#3a90d0"/>
<path d="M871.7 58.7L876.3 58.7A4.6 4.6 0 0 1 871.7 63.3Z" fill="#d03020"/>
<path d="M871.7 58.7L871.7 63.3A4.6 4.6 0 0 1 867.1 58.7Z" fill="#e07a20"/>
<circle cx="871.7" cy="58.7" r="1.8" fill="#111"/>
<path d="M868 82.8Q886 79 901.5 84.2Q904.5 82 905 70Q905.5 50 906 50Q906.7 50 907 70Q907.5 82 910 84.2Q917 79.5 926 81.8" fill="none" stroke="#111" stroke-width="1.6"/>
<text x="866.8" y="78.5" font-family="Liberation Serif" font-size="29" fill="#111" textLength="9.5" lengthAdjust="spacingAndGlyphs">ı</text>
<text x="878.3" y="78.5" font-family="Liberation Serif" font-size="33" fill="#111" textLength="22" lengthAdjust="spacingAndGlyphs">R</text>
<text x="910.8" y="78.5" font-family="Liberation Serif" font-size="33" fill="#111" textLength="15.5" lengthAdjust="spacingAndGlyphs">S</text>
<text x="868.2" y="93" font-family="Liberation Serif" font-size="5.6" fill="#222" stroke="#222" stroke-width="0.15" textLength="57.8" lengthAdjust="spacingAndGlyphs">VAO SED ANALYSIS TOOL</text>
</g>

<g shape-rendering="geometricPrecision"><text x="420.30" y="15.8" font-family="Liberation Sans" font-size="12.3" fill="#f0f0f0" textLength="73.12" lengthAdjust="spacingAndGlyphs" >MESSIER 82</text><text x="6.30" y="36" font-family="Liberation Sans" font-size="12.3" fill="#111" textLength="19.52" lengthAdjust="spacingAndGlyphs" >File</text><text x="35.30" y="36" font-family="Liberation Sans" font-size="12.3" fill="#111" textLength="44.29" lengthAdjust="spacingAndGlyphs" >Display</text><text x="6.50" y="64.8" font-family="Liberation Sans" font-size="12.3" fill="#111" textLength="36.68" lengthAdjust="spacingAndGlyphs" >X axis</text><text x="131.00" y="64.8" font-family="Liberation Sans" font-size="12.3" fill="#111" textLength="36.70" lengthAdjust="spacingAndGlyphs" >Y axis</text><text x="11.00" y="83.1" font-family="Liberation Sans" font-size="12.3" fill="#111" textLength="77.07" lengthAdjust="spacingAndGlyphs" >SpectralAxis</text><text x="136.00" y="83.1" font-family="Liberation Sans" font-size="12.3" fill="#111" textLength="50.18" lengthAdjust="spacingAndGlyphs" >FluxAxis</text><text x="269.30" y="83" font-family="Liberation Mono" font-size="15" fill="#000" textLength="104.11" lengthAdjust="spacingAndGlyphs" stroke="#000" stroke-width="0.35">1.38089791E16</text><text x="413.90" y="83" font-family="Liberation Mono" font-size="15" fill="#000" textLength="63.61" lengthAdjust="spacingAndGlyphs" stroke="#000" stroke-width="0.35">52.26966</text><text x="562.20" y="82.1" font-family="Liberation Sans" font-size="12.3" fill="#111" textLength="28.32" lengthAdjust="spacingAndGlyphs" >Print</text><text x="608.30" y="82.1" font-family="Liberation Sans" font-size="12.3" fill="#111" textLength="47.54" lengthAdjust="spacingAndGlyphs" >Redraw</text><text x="11.60" y="128.8" font-family="Liberation Sans" font-size="12.3" fill="#111" textLength="47.24" lengthAdjust="spacingAndGlyphs" >Grid off</text><text x="99.30" y="128.8" font-family="Liberation Sans" font-size="12.3" fill="#111" textLength="28.73" lengthAdjust="spacingAndGlyphs" >Auto</text><text x="173.20" y="128.8" font-family="Liberation Sans" font-size="12.3" fill="#111" textLength="54.82" lengthAdjust="spacingAndGlyphs" >Plot type</text><text x="443.40" y="128.7" font-family="Liberation Sans" font-size="12.3" fill="#111" textLength="45.92" lengthAdjust="spacingAndGlyphs" >Expand</text><text x="718.20" y="130" font-family="Liberation Sans" font-size="12.3" fill="#111" textLength="54.03" lengthAdjust="spacingAndGlyphs" >Metadata</text><text x="790.20" y="129.6" font-family="Liberation Sans" font-size="12.3" fill="#111" textLength="74.61" lengthAdjust="spacingAndGlyphs" >Flux density</text><text x="907.50" y="130" font-family="Liberation Sans" font-size="12.3" fill="#111" textLength="27.48" lengthAdjust="spacingAndGlyphs" >Units</text></g>
</svg>
</body></html>
